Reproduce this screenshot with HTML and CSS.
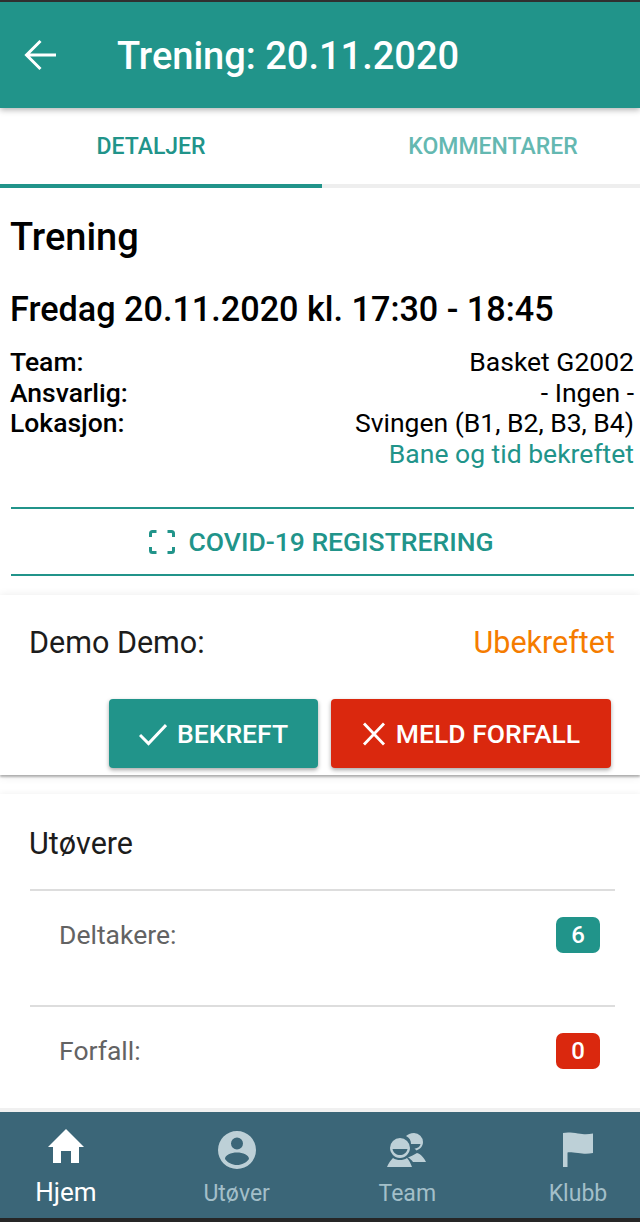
FILE: index.html
```html
<!DOCTYPE html>
<html lang="nb">

<head>
  <meta charset="UTF-8">
  <meta name="viewport" content="width=device-width, initial-scale=1.0">
  <title>Trening: 20.11.2020</title>
  <link rel="stylesheet" href="styles.css">
</head>

<body>
  <header class="app-header">
    <svg class="back-icon" viewBox="0 0 34 34" width="34" height="34">
      <path d="M33 17H4M17.500 3 3.500 17 17.500 31" fill="none" stroke="#fff" stroke-width="3" />
    </svg>
    <h1 class="app-title">Trening: 20.11.2020</h1>
  </header>

  <nav class="tabs">
    <div class="tab tab-active">DETALJER</div>
    <div class="tab tab-second">KOMMENTARER</div>
  </nav>

  <main class="content">
    <section class="details">
      <h2 class="event-type">Trening</h2>
      <h3 class="event-date">Fredag 20.11.2020 kl. 17:30 - 18:45</h3>
      <div class="info-row"><b>Team:</b><span>Basket G2002</span></div>
      <div class="info-row"><b>Ansvarlig:</b><span>- Ingen -</span></div>
      <div class="info-row"><b>Lokasjon:</b><span>Svingen (B1, B2, B3, B4)</span></div>
      <div class="info-row info-confirmed"><span>Bane og tid bekreftet</span></div>
      <div class="covid-button">
        <svg class="scan-icon" viewBox="0 0 26 24" width="26" height="24">
          <path d="M1.500 7V3.500q0-2 2-2h4M18.500 1.500h4q2 0 2 2V7M24.500 17v3.500q0 2-2 2h-4M7.500 22.500h-4q-2 0-2-2V17" fill="none" stroke="#21948a" stroke-width="3" />
        </svg>
        COVID-19 REGISTRERING
      </div>
    </section>

    <section class="card attendance">
      <div class="attendance-row">
        <span>Demo Demo:</span>
        <span class="status-pending">Ubekreftet</span>
      </div>
      <div class="actions">
        <div class="btn btn-confirm">
          <svg viewBox="0 0 28 28" width="28" height="28">
            <path d="M1 15l8.500 8.500L27 5" fill="none" stroke="#fff" stroke-width="3" />
          </svg>
          BEKREFT
        </div>
        <div class="btn btn-absent">
          <svg viewBox="0 0 24 24" width="24" height="24">
            <path d="M2 1.500l20 21M22 1.500l-20 21" fill="none" stroke="#fff" stroke-width="2.800" />
          </svg>
          MELD FORFALL
        </div>
      </div>
    </section>

    <section class="players">
      <h4 class="players-title">Utøvere</h4>
      <div class="player-row">
        <span>Deltakere:</span>
        <span class="badge badge-green">6</span>
      </div>
      <div class="player-row">
        <span>Forfall:</span>
        <span class="badge badge-red">0</span>
      </div>
    </section>
  </main>

  <footer class="bottom-nav">
    <div class="nav-item nav-active">
      <svg viewBox="0 1 38 41" width="38" height="41">
        <path d="M19 1 37 19H32V35H24V23H14V35H6V19H1Z" fill="#fff" />
      </svg>
      <span>Hjem</span>
    </div>
    <div class="nav-item">
      <svg viewBox="0 -2 38 41" width="38" height="41">
        <path fill-rule="evenodd" d="M19 0a19 19 0 1 0 0 38a19 19 0 1 0 0-38ZM19 6.500a6 6 0 1 1 0 12a6 6 0 1 1 0-12ZM19 21.500c6 0 12 2.500 12 6.500c-2.500 3.500-7 6-12 6s-9.500-2.500-12-6c0-4 6-6.500 12-6.500Z" fill="#bdd0d7" />
      </svg>
      <span>Utøver</span>
    </div>
    <div class="nav-item">
      <svg viewBox="0 -4 40 41" width="40" height="41">
        <path fill-rule="evenodd" d="M27 0a9 9 0 0 1 9 9c0 4-2.500 7-6.500 8.500l-2-2c2.500 0 5.500-1.500 6-4.500H24c0-3.500-1.500-6.500-5-8C20.500 1.500 23.500 0 27 0ZM30 20c4 1 7 5 9 9H26c-1.500-2-3-3.500-5-4.500 3-1 6-3 9-4.500Z" fill="#bdd0d7" />
        <path fill-rule="evenodd" d="M13 5a10 10 0 0 1 10 10c0 5-4.500 10-10 10S3 20 3 15A10 10 0 0 1 13 5ZM5.500 16c1 4 4 6 7.500 6s6.500-2 7.500-6ZM6 25c2 1.500 4.500 2 7 2s5-.5 7-2c2 2 3.500 5 5 9H0c1.500-4 4-7 6-9Z" fill="#bdd0d7" />
      </svg>
      <span>Team</span>
    </div>
    <div class="nav-item">
      <svg viewBox="0 -4 30 41" width="30" height="41">
        <path d="M0 0c4-1 9-.5 15 .5s10 1 15 0V20c-5 1-9 1-15 0S5 19 4.500 19.500V34H0Z" fill="#bdd0d7" />
      </svg>
      <span>Klubb</span>
    </div>
  </footer>
</body>

</html>
```

FILE: styles.css
```css
* {
  box-sizing: border-box;
  margin: 0;
  padding: 0;
}

body {
  display: flex;
  flex-direction: column;
  height: 1222px;
  overflow: hidden;
  background-color: #ffffff;
  border-top: 2px solid #303030;
  border-bottom: 4px solid #262626;
  color: #000000;
  font-family: Roboto, sans-serif;
}

.app-header {
  display: flex;
  align-items: center;
  flex-shrink: 0;
  height: 106px;
  padding-left: 23px;
  background-color: #21948a;
  box-shadow: 0 2px 6px rgba(0, 0, 0, 0.3);
  position: relative;
}

.back-icon {
  margin-right: 60px;
}

.app-title {
  padding-top: 2px;
  font-size: 38px;
  font-weight: 500;
  color: #ffffff;
}

.tabs {
  display: flex;
  flex-shrink: 0;
  height: 80px;
  box-shadow: inset 0 -4px 0 #eeeeee;
}

.tab {
  display: flex;
  align-items: center;
  justify-content: center;
  height: 80px;
  border-bottom: 4px solid transparent;
  font-size: 23px;
  font-weight: 500;
  color: #64b8b1;
}

.tab-active {
  width: 322px;
  padding-right: 20px;
  color: #21948a;
  border-bottom-color: #21948a;
}

.tab-second {
  flex: 1;
  padding-left: 24px;
}

.content {
  flex: 1;
  overflow: hidden;
  background-color: #ffffff;
}

.details {
  height: 407px;
  padding: 27px 6px 0 10px;
  background-color: #ffffff;
}

.event-type {
  font-size: 38px;
  font-weight: 500;
  line-height: 44px;
}

.event-date {
  margin-top: 30px;
  margin-bottom: 18px;
  font-size: 34.200px;
  font-weight: 500;
  line-height: 40px;
}

.info-row {
  display: flex;
  justify-content: space-between;
  font-size: 26.500px;
  line-height: 30.500px;
}

.info-row b {
  font-weight: 500;
}

.info-confirmed {
  justify-content: flex-end;
  color: #21948a;
}

.covid-button {
  display: flex;
  align-items: center;
  justify-content: center;
  gap: 14px;
  height: 69px;
  margin: 38px 0 0 1px;
  padding-right: 3px;
  border-top: 2px solid #21948a;
  border-bottom: 2px solid #21948a;
  font-size: 26.500px;
  font-weight: 500;
  color: #21948a;
}

.card {
  background-color: #ffffff;
  box-shadow: 0 2px 2px rgba(0, 0, 0, 0.28), 0 1px 9px rgba(0, 0, 0, 0.1);
}

.attendance {
  position: relative;
  height: 180px;
  padding: 0 25px 0 29px;
}

.attendance-row {
  display: flex;
  justify-content: space-between;
  height: 104px;
  padding-top: 30px;
  font-size: 30.500px;
  line-height: 35px;
  color: #1c1c1c;
}

.status-pending {
  color: #f57c00;
}

.actions {
  display: flex;
  justify-content: flex-end;
  gap: 13px;
  margin-right: 4px;
}

.btn {
  display: flex;
  align-items: center;
  justify-content: center;
  gap: 10px;
  height: 69px;
  border-radius: 4px;
  box-shadow: 0 2px 4px rgba(0, 0, 0, 0.35);
  font-size: 26.500px;
  font-weight: 500;
  color: #ffffff;
}

.btn-confirm {
  width: 209px;
  background-color: #21948a;
}

.btn-absent {
  width: 280px;
  background-color: #da280e;
}

.players {
  height: 318px;
  margin-top: 19px;
  padding: 0 25px 0 30px;
  background-color: #ffffff;
  border-bottom: 4px solid #f0f0f0;
  box-shadow: 0 -1px 6px rgba(0, 0, 0, 0.05);
}

.players-title {
  height: 97px;
  padding-top: 32px;
  border-bottom: 2px solid #dddddd;
  font-size: 30.500px;
  font-weight: 400;
  line-height: 35px;
  text-indent: -1px;
  color: #1c1c1c;
}

.player-row {
  display: flex;
  justify-content: space-between;
  align-items: flex-start;
  height: 116px;
  padding: 26px 15px 0 29px;
  border-bottom: 2px solid #dddddd;
  font-size: 26.500px;
  line-height: 36px;
  color: #636363;
}

.player-row:last-child {
  border-bottom: none;
}

.badge {
  display: flex;
  align-items: center;
  justify-content: center;
  width: 44px;
  height: 36px;
  border-radius: 7px;
  font-size: 24px;
  font-weight: 500;
  color: #ffffff;
}

.badge-green {
  background-color: #21948a;
}

.badge-red {
  background-color: #da280e;
}

.bottom-nav {
  display: flex;
  justify-content: space-between;
  flex-shrink: 0;
  height: 106px;
  padding-left: 4px;
  background-color: #3b6678;
}

.nav-item {
  display: flex;
  flex-direction: column;
  align-items: center;
  gap: 10px;
  width: 124px;
  padding-top: 17px;
  font-size: 23px;
  line-height: 28px;
  color: #a3bfc9;
}

.nav-item svg {
  flex-shrink: 0;
}

.nav-active {
  gap: 8px;
  font-size: 26px;
  color: #ffffff;
}
```
